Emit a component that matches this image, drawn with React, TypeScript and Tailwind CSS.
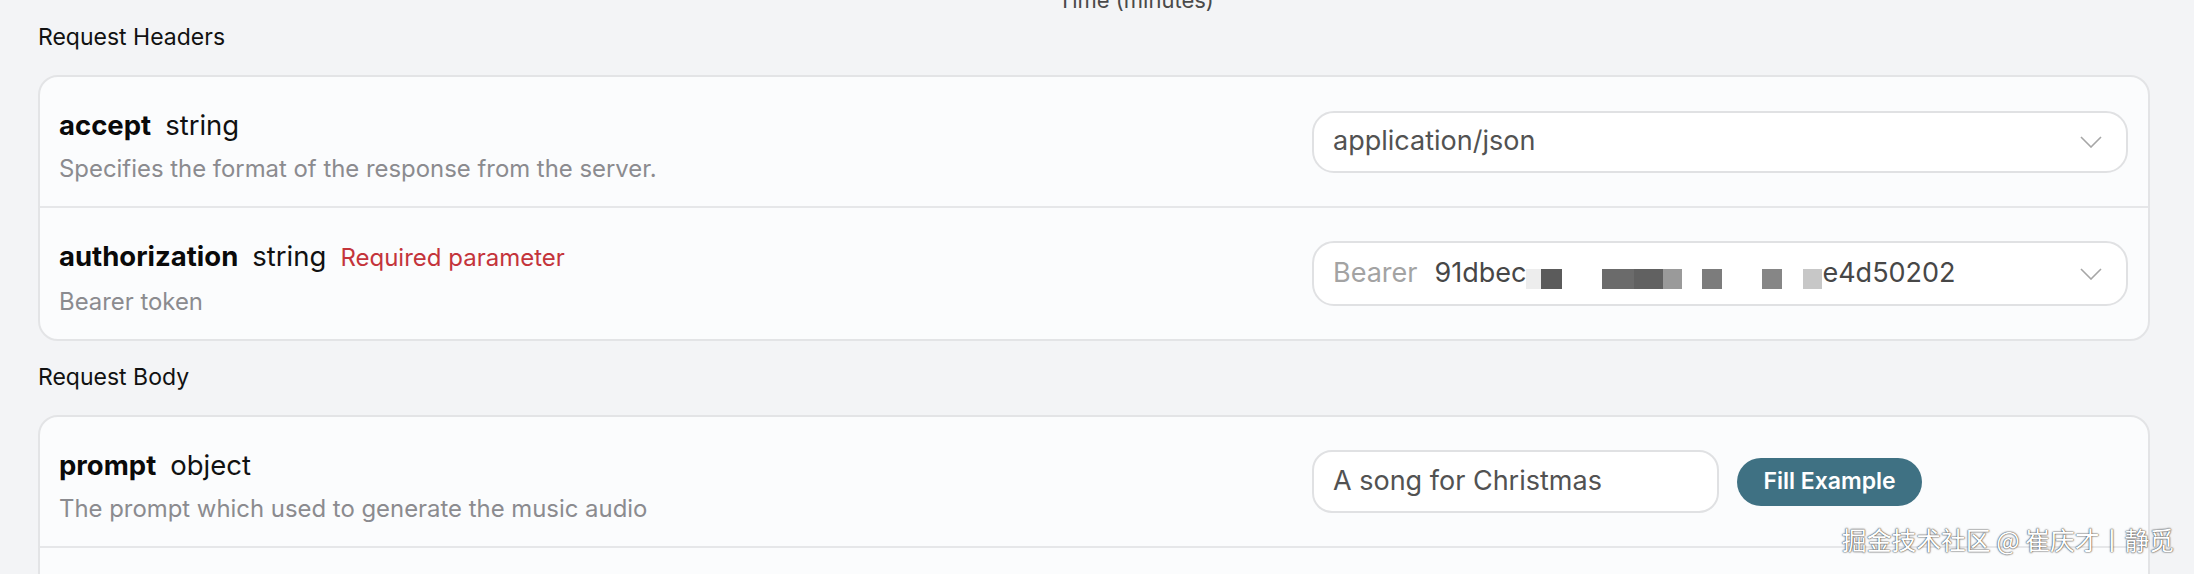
import type { ReactNode } from 'react';

// Redacted token blocks: [width, colour, gap before]
const MOSAIC: [number, string, number][] = [
  [15, 'bg-[#ededed]', 0],
  [21, 'bg-[#5b5b5b]', 0],
  [32, 'bg-[#6b6b6b]', 40],
  [29, 'bg-[#616161]', 0],
  [19, 'bg-[#9a9a9a]', 0],
  [20, 'bg-[#7c7c7c]', 20],
  [20, 'bg-[#868686]', 40],
  [19, 'bg-[#c7c7c7]', 21],
];

function Chevron() {
  return (
    <svg width="22" height="12" viewBox="0 0 22 12" fill="none" className="shrink-0">
      <path d="M1 1L11 11L21 1" stroke="#a6a6a6" strokeWidth="1.6" />
    </svg>
  );
}

interface ParamRowProps {
  name: string;
  type: string;
  desc: string;
  required?: boolean;
  divider?: boolean;
  children?: ReactNode;
}

function ParamRow({ name, type, desc, required, divider, children }: ParamRowProps) {
  return (
    <div
      className={`flex items-center pl-[19px] pr-[20px] ${divider ? 'border-b-2 border-[#e6e7e9]' : ''}`}
    >
      <div className="flex-1 pt-[30px] pb-[21px]">
        <div className="flex items-baseline gap-[14px] leading-[36px]">
          <span className="text-[27.5px] font-bold text-[#0a0a0a]">{name}</span>
          <span className="text-[27.5px] text-[#111]">{type}</span>
          {required && <span className="text-[24px] text-[#c4343b]">Required parameter</span>}
        </div>
        <div className="mt-[10px] text-[23.9px] leading-[32px] text-[#8b8b8f]">{desc}</div>
      </div>
      <div className="w-[816px] shrink-0">{children}</div>
    </div>
  );
}

function SectionTitle({ children, className }: { children: ReactNode; className: string }) {
  return <div className={`text-[23px] leading-[32px] text-[#111] ${className}`}>{children}</div>;
}

export default function App() {
  return (
    <div className="relative h-[574px] w-full overflow-hidden bg-[#f3f4f6] pl-[38px] pr-[44px] font-[Inter,'Noto_Sans',sans-serif]">
      {/* chart axis label, cut off at the top */}
      <div className="flex h-[21px]">
        <div className="-mt-[11px] ml-[1020px] text-[22px] leading-none text-[#4a4a4a]">Time (minutes)</div>
      </div>

      <SectionTitle className="mb-[22px]">Request Headers</SectionTitle>

      <div className="overflow-hidden rounded-[20px] border-2 border-[#e3e4e6] bg-[#fbfcfd]">
        <ParamRow name="accept" type="string" desc="Specifies the format of the response from the server." divider>
          <div className="flex h-[62px] items-center justify-between rounded-[22px] border-2 border-[#e0e1e3] bg-white pl-[19px] pr-[24px]">
            <span className="text-[27px] text-[#525252]">application/json</span>
            <Chevron />
          </div>
        </ParamRow>
        <ParamRow name="authorization" type="string" desc="Bearer token" required>
          <div className="flex h-[65px] items-center justify-between rounded-[22px] border-2 border-[#e0e1e3] bg-white pl-[19px] pr-[24px]">
            <div className="flex items-center text-[27px]">
              <span className="text-[#a3a3a3]">Bearer</span>
              <span className="ml-[17px] text-[#474747]">91dbec</span>
              <div className="mt-[11px] flex h-[20px]">
                {MOSAIC.map(([w, bg, gap], i) => (
                  <span key={i} className={`h-[20px] ${bg}`} style={{ width: w, marginLeft: gap }} />
                ))}
              </div>
              <span className="text-[#474747]">e4d50202</span>
            </div>
            <Chevron />
          </div>
        </ParamRow>
      </div>

      <SectionTitle className="mt-[20px] mb-[22px]">Request Body</SectionTitle>

      <div className="overflow-hidden rounded-[20px] border-2 border-[#e3e4e6] bg-[#fbfcfd]">
        <ParamRow name="prompt" type="object" desc="The prompt which used to generate the music audio" divider>
          <div className="flex items-center gap-[18px]">
            <div className="flex h-[63px] w-[407px] items-center rounded-[20px] border-2 border-[#e0e1e3] bg-white pl-[19px]">
              <span className="text-[27px] text-[#525252]">A song for Christmas</span>
            </div>
            <button className="h-[48px] w-[185px] rounded-full bg-[#3f7183] text-[23px] font-semibold text-white">
              Fill Example
            </button>
          </div>
        </ParamRow>
        <div className="h-[80px]" />
      </div>

      {/* site watermark */}
      <div className="absolute right-[20px] top-[521px] font-['Noto_Sans_CJK_SC',sans-serif] text-[24.8px] leading-[36px] text-white [text-shadow:0_0_2px_#3a3a3a,0_0_1px_#3a3a3a]">
        掘金技术社区 @ 崔庆才丨静觅
      </div>
    </div>
  );
}
